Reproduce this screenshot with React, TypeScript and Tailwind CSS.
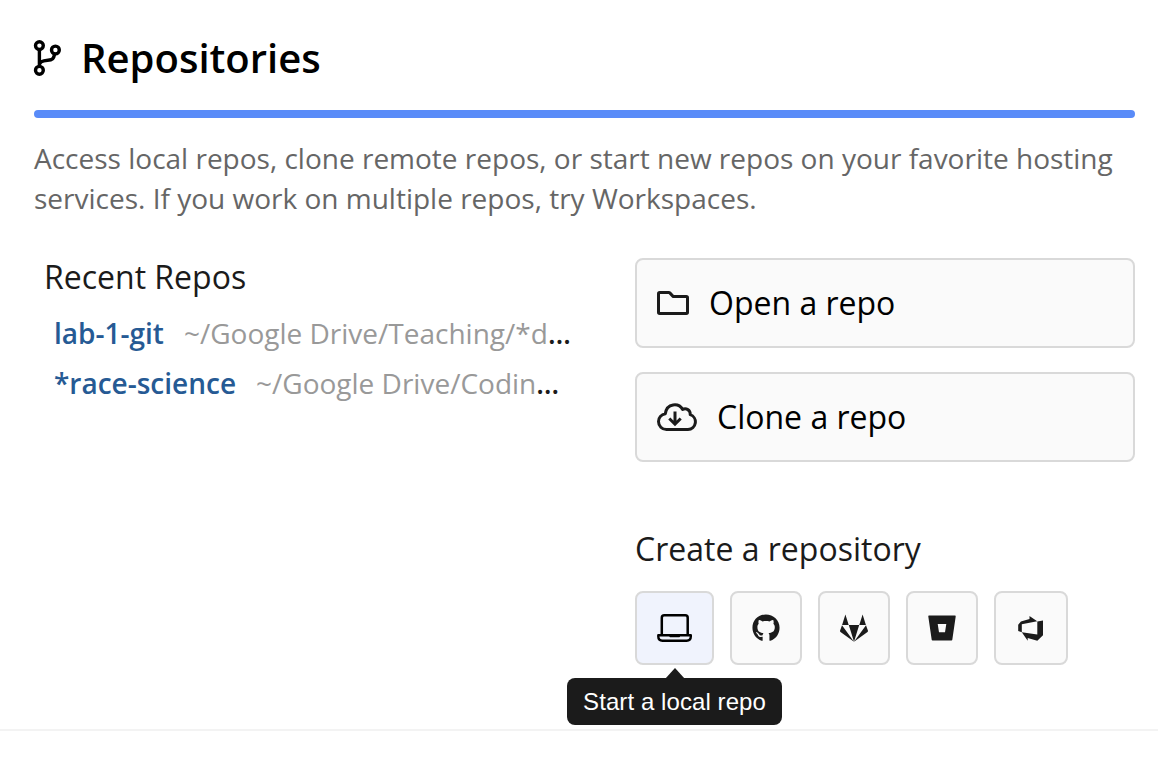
import type { ReactNode } from "react";

const line = { fill: "none", strokeLinecap: "round", strokeLinejoin: "round" } as const;

function BranchIcon() {
  return (
    <svg className="block h-[38px] w-[30px] shrink-0" viewBox="33 39 30 38" stroke="#000" strokeWidth="3.4" {...line}>
      <circle cx="39.400" cy="45.600" r="3.900" />
      <circle cx="55.400" cy="50" r="3.900" />
      <circle cx="39.400" cy="70.300" r="3.900" />
      <path d="M39.400 50v16M54.600 54.200l-1 3.200q-.7 2-2.600 2.300l-7.200 1.200q-3.600.700-4.200 3.300" />
    </svg>
  );
}

function FolderIcon() {
  return (
    <svg className="block h-6 w-8 shrink-0" viewBox="657 291 32 24" stroke="#1b1b1b" strokeWidth="3" {...line}>
      <path d="M658.500 293.700q0-1.200 1.200-1.200h9.100q.6 0 1 .4l3 3.200q.4.400 1 .4h12.500q1.200 0 1.200 1.200v14.600q0 1.200-1.200 1.200h-26.600q-1.200 0-1.200-1.200z" />
    </svg>
  );
}

function CloudIcon() {
  return (
    <svg className="block h-7 w-10 shrink-0" viewBox="657 403 40 28" stroke="#1b1b1b" strokeWidth="3" {...line}>
      <path d="M666.500 429.500h21.500a7.600 7.600 0 0 0 2.200-14.800c.4-4.600-4.200-7.200-7.600-5.200-3.800-6.800-15.800-6.600-17.300 4.300-4 .9-6.800 4-6.800 7.700 0 4.500 3.500 8 8 8z" />
      <path d="M675 411.500v12.300M669.300 418.500l5.700 5.700 5.700-5.700" strokeWidth="3" strokeLinecap="butt" strokeLinejoin="miter" />
    </svg>
  );
}

function LaptopIcon() {
  return (
    <svg className="block h-7 w-[35px]" viewBox="657 614 35 28" stroke="#000" strokeWidth="2.500" {...line}>
      <path d="M661.800 634v-16.200q0-2.500 2.500-2.500h20.900q2.500 0 2.500 2.500V634" />
      <path d="M658.300 635.200h32.500v1.300q0 4.200-4.200 4.200h-24.100q-4.200 0-4.200-4.200z" strokeWidth="2.400" />
      <path d="M670.200 636.400h9" strokeWidth="1.600" />
    </svg>
  );
}

function GithubIcon() {
  return (
    <svg className="block h-7 w-7" viewBox="0 0 496 512" fill="#1b1b1b">
      <path d="M165.900 397.400c0 2-2.300 3.600-5.200 3.600-3.300.3-5.600-1.300-5.600-3.600 0-2 2.300-3.600 5.200-3.600 3-.3 5.600 1.300 5.600 3.600zm-31.100-4.500c-.7 2 1.300 4.300 4.300 4.900 2.600 1 5.600 0 6.200-2s-1.300-4.300-4.300-5.200c-2.600-.7-5.500.3-6.200 2.300zm44.200-1.700c-2.900.7-4.900 2.600-4.600 4.900.3 2 2.900 3.300 5.900 2.600 2.900-.7 4.900-2.600 4.600-4.600-.3-1.900-3-3.200-5.900-2.900zM244.800 8C106.100 8 0 113.300 0 252c0 110.900 69.800 205.800 169.500 239.200 12.800 2.300 17.300-5.600 17.300-12.100 0-6.200-.3-40.400-.3-61.400 0 0-70 15-84.700-29.800 0 0-11.400-29.100-27.800-36.600 0 0-22.900-15.700 1.600-15.400 0 0 24.900 2 38.600 25.800 21.900 38.600 58.600 27.500 72.900 20.900 2.300-16 8.800-27.100 16-33.700-55.900-6.200-112.300-14.300-112.300-110.500 0-27.500 7.600-41.300 23.600-58.900-2.600-6.500-11.100-33.300 2.600-67.900 20.900-6.500 69 27 69 27 20-5.600 41.500-8.500 62.800-8.500s42.800 2.900 62.800 8.500c0 0 48.100-33.600 69-27 13.700 34.700 5.200 61.400 2.600 67.900 16 17.700 25.800 31.500 25.800 58.900 0 96.500-58.900 104.200-114.800 110.500 9.200 7.900 17 22.900 17 46.400 0 33.700-.3 75.400-.3 83.600 0 6.500 4.600 14.400 17.300 12.100C428.200 457.800 496 362.900 496 252 496 113.300 383.500 8 244.800 8z" />
    </svg>
  );
}

function GitlabIcon() {
  return (
    <svg className="block h-7 w-7" viewBox="840 614 28 28" fill="#1b1b1b">
      <path d="M845.400 614.600l3.300 10.400h-6.600zM862.600 614.600l3.300 10.400h-6.600zM848.800 625h10.400L854 641.700zM842 625.200l12 16.500-13.500-9.800q-.7-.6-.4-1.500zM866 625.200l-12 16.500 13.500-9.800q.7-.6.4-1.500z" />
    </svg>
  );
}

function BitbucketIcon() {
  return (
    <svg className="block h-7 w-7" viewBox="928 614 28 28" fill="#1b1b1b" fillRule="evenodd">
      <path d="M929 615.500h26q.9 0 .7.900l-3.400 23.300q-.1.800-.9.800h-18.800q-.8 0-.9-.8l-3.400-23.300q-.2-.9.700-.9zM937.700 624l1.300 8.200h6l1.300-8.200z" />
    </svg>
  );
}

function DevOpsIcon() {
  return (
    <svg className="mr-px block h-[25px] w-[25px]" viewBox="1018 615.500 25 25" fill="#1b1b1b">
      <path d="M1018.200 624.300l2.700-3.300 8.600-2.500v-3l7.700 5.300-15.400 2.900v8.100l-3.600-1.200zM1043 619.900v14.800l-5.700 5.600-9.600-2.700v2.700l-5.900-8.500 15.500 2.100v-12.900z" />
    </svg>
  );
}

function ActionButton({ icon, children }: { icon: ReactNode; children: ReactNode }) {
  return (
    <button className="flex h-[90px] w-full items-center gap-5 rounded-lg border-2 border-[#d9d9d9] bg-[#fafafa] px-5 text-[32px] text-black">
      {icon}
      <span className="whitespace-nowrap">{children}</span>
    </button>
  );
}

function HostButton({ label, className, children }: { label: string; className: string; children: ReactNode }) {
  return (
    <button aria-label={label} className={`relative flex h-[74px] items-center justify-center rounded-lg border-2 border-[#d9d9d9] ${className}`}>
      {children}
    </button>
  );
}

function RepoRow({ name, path }: { name: string; path: string }) {
  return (
    <li className="flex h-[50px] items-center gap-5 whitespace-nowrap">
      <a className="font-semibold text-[#265a94]">{name}</a>
      <span className="text-[#999]">
        {path}
        <span className="font-semibold text-[#1b1b1b]">…</span>
      </span>
    </li>
  );
}

export default function App() {
  return (
    <main className="h-[772px] overflow-hidden bg-white font-['Open_Sans',sans-serif] text-[#1b1b1b]">
      <section className="h-[731px] border-b-2 border-[#f3f3f3] pr-[23px] pl-[34px]">
        <header className="-ml-px flex h-[110px] items-center gap-[18px] pt-[6px]">
          <BranchIcon />
          <h1 className="text-[40px] leading-[54px] font-semibold text-black">Repositories</h1>
        </header>
        <div className="h-2 rounded-full bg-[#598bf8]" />
        <p className="mt-5 text-[28px] leading-10 whitespace-nowrap text-[#666]">
          Access local repos, clone remote repos, or start new repos on your favorite hosting
          <br />
          services. If you work on multiple repos, try Workspaces.
        </p>
        <div className="mt-10 grid grid-cols-[601px_500px]">
          <div className="pl-[10px]">
            <h2 className="text-[32px] leading-[38px]">Recent Repos</h2>
            <ul className="mt-3 pl-[10px] text-[28px] leading-10">
              <RepoRow name="lab-1-git" path="~/Google Drive/Teaching/*d" />
              <RepoRow name="*race-science" path="~/Google Drive/Codin" />
            </ul>
          </div>
          <div>
            <div className="flex flex-col gap-6">
              <ActionButton icon={<FolderIcon />}>Open a repo</ActionButton>
              <ActionButton icon={<CloudIcon />}>Clone a repo</ActionButton>
            </div>
            <h2 className="mt-[65px] text-[32px] leading-[44px]">Create a repository</h2>
            <div className="mt-5 flex gap-4">
              <HostButton label="Local" className="w-[79px] bg-[#f0f3fd]">
                <LaptopIcon />
                <span className="absolute top-[85px] -left-[70px] flex h-[47px] w-[215px] items-center justify-center rounded-lg bg-[#1b1b1b] font-['Liberation_Sans',sans-serif] text-2xl tracking-[0.08px] whitespace-nowrap text-white">
                  <svg className="absolute -top-[10px] h-[11px] w-5" viewBox="0 0 20 11" fill="#1b1b1b">
                    <path d="M0 11L10 0l10 11z" />
                  </svg>
                  Start a local repo
                </span>
              </HostButton>
              <HostButton label="GitHub" className="w-[72px] bg-[#fafafa]"><GithubIcon /></HostButton>
              <HostButton label="GitLab" className="w-[72px] bg-[#fafafa]"><GitlabIcon /></HostButton>
              <HostButton label="Bitbucket" className="w-[72px] bg-[#fafafa]"><BitbucketIcon /></HostButton>
              <HostButton label="Azure DevOps" className="w-[74px] bg-[#fafafa]"><DevOpsIcon /></HostButton>
            </div>
          </div>
        </div>
      </section>
    </main>
  );
}
